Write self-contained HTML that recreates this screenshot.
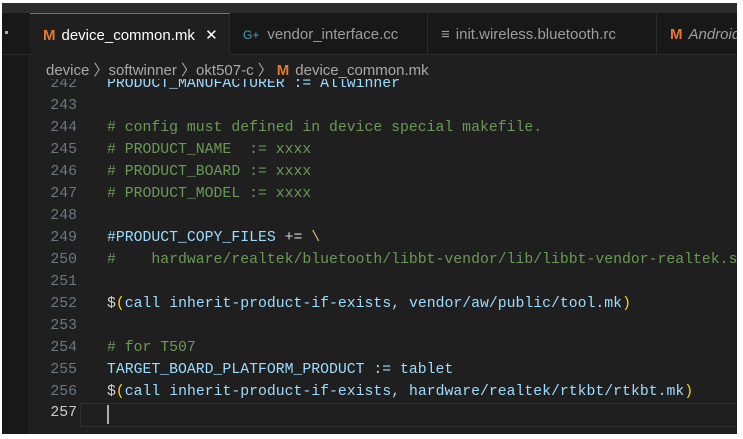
<!DOCTYPE html><html><head><style>
body{margin:0;width:743px;height:439px;background:#fff;overflow:hidden;position:relative;font-family:"Liberation Sans",sans-serif}
#win{position:absolute;left:2px;top:3px;width:735px;height:431px;background:#1f1f1f;overflow:hidden}
#top{position:absolute;left:0;top:0;width:735px;height:10px;background:#2b2b2b}
#tabs{position:absolute;left:0;top:10px;width:735px;height:41px;background:#181818;border-bottom:1px solid #2b2b2b}
.tab{position:absolute;top:0;height:41px;font-size:15px;color:#9d9d9d;line-height:44px;border-right:1px solid #2b2b2b;white-space:nowrap;box-sizing:border-box;padding-left:13px}
.tab.act{background:#1f1f1f;color:#fff;border-top:1px solid #3b82c4;height:42px}
.M{color:#e37933;font-weight:bold;margin-right:6px}
#bc{position:absolute;left:44px;top:56px;font-size:15px;color:#a9a9a9}
#gut{position:absolute;left:0;top:52px;width:26px;height:380px;background:#181818}
.ln{position:absolute;left:4px;width:45px;text-align:right;font:14.8px "Liberation Mono",monospace;color:#6e7681}
.cd{position:absolute;left:79px;font:14.8px "Liberation Mono",monospace;color:#d4d4d4;white-space:pre}
.c{color:#6a9955}.v{color:#9cdcfe}.y{color:#ffd700}.s{color:#d7ba7d}
</style></head><body><div id="win">
<div id="top"></div>
<div id="tabs">
<div style="position:absolute;left:3px;top:18px;width:3px;height:3px;background:#aaa"></div>
<div class="tab act" style="left:28px;width:200px"><span class="M">M</span>device_common.mk <span style="margin-left:6px">✕</span></div>
<div class="tab" style="left:228px;width:198px"><span style="color:#519aba;font-size:12px;margin-right:8px">G+</span>vendor_interface.cc</div>
<div class="tab" style="left:426px;width:229px"><span style="margin-right:6px">≡</span>init.wireless.bluetooth.rc</div>
<div class="tab" style="left:655px;width:100px;border:none"><span class="M">M</span><i>Android</i></div>
</div>
<div id="gut"></div>
<div id="bc">device 〉softwinner 〉okt507-c 〉<span class="M" style="margin-left:4px">M</span>device_common.mk</div>
<div style="position:absolute;left:26px;top:76px;width:709px;height:355px;overflow:hidden">
<div style="position:relative;top:-73px">
<div class="ln" style="top:70px">242</div><div class="cd" style="top:70px;color:#9cdcfe">PRODUCT_MANUFACTURER := Allwinner</div>
<div class="ln" style="top:92px">243</div>
<div class="ln" style="top:114px">244</div><div class="cd c" style="top:114px"># config must defined in device special makefile.</div>
<div class="ln" style="top:136px">245</div><div class="cd c" style="top:136px"># PRODUCT_NAME  := xxxx</div>
<div class="ln" style="top:158px">246</div><div class="cd c" style="top:158px"># PRODUCT_BOARD := xxxx</div>
<div class="ln" style="top:180px">247</div><div class="cd c" style="top:180px"># PRODUCT_MODEL := xxxx</div>
<div class="ln" style="top:202px">248</div>
<div class="ln" style="top:224px">249</div><div class="cd" style="top:224px"><span class="v">#PRODUCT_COPY_FILES</span> += <span class="s">\</span></div>
<div class="ln" style="top:246px">250</div><div class="cd c" style="top:246px">#    hardware/realtek/bluetooth/libbt-vendor/lib/libbt-vendor-realtek.so</div>
<div class="ln" style="top:268px">251</div>
<div class="ln" style="top:290px">252</div><div class="cd" style="top:290px">$<span class="y">(</span><span class="v">call</span> <span class="v">inherit-product-if-exists, vendor/aw/public/tool.mk</span><span class="y">)</span></div>
<div class="ln" style="top:312px">253</div>
<div class="ln" style="top:334px">254</div><div class="cd c" style="top:334px"># for T507</div>
<div class="ln" style="top:356px">255</div><div class="cd v" style="top:356px">TARGET_BOARD_PLATFORM_PRODUCT := tablet</div>
<div class="ln" style="top:378px">256</div><div class="cd" style="top:378px">$<span class="y">(</span><span class="v">call</span> <span class="v">inherit-product-if-exists, hardware/realtek/rtkbt/rtkbt.mk</span><span class="y">)</span></div>
<div style="position:absolute;left:52px;top:397px;width:660px;height:22px;border:1px solid #2e2e2e"></div>
<div class="ln" style="top:399px;color:#ccc">257</div>
<div style="position:absolute;left:79px;top:399px;width:2px;height:19px;background:#aeafad"></div>
</div></div>
</div></body></html>
